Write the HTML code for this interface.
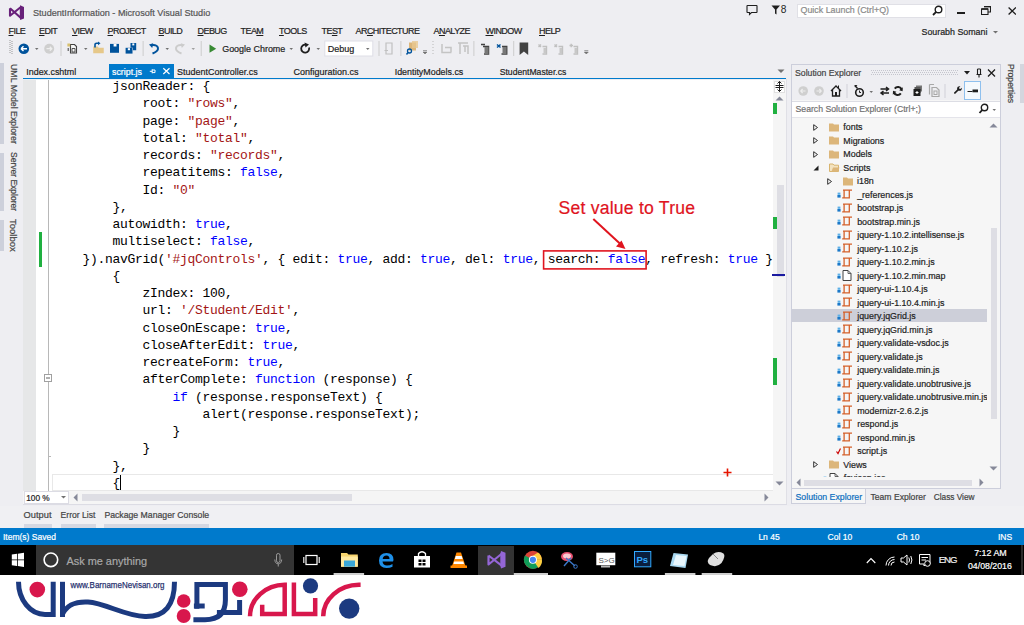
<!DOCTYPE html>
<html><head><meta charset="utf-8">
<style>
*{margin:0;padding:0;box-sizing:border-box}
html,body{width:1024px;height:625px;overflow:hidden;background:#fff}
body{position:relative;font-family:"Liberation Sans",sans-serif;font-size:9px;color:#1e1e1e}
.a{position:absolute}
.t{position:absolute;white-space:pre;line-height:1;-webkit-text-stroke:0.2px currentColor}
#vs{position:absolute;left:0;top:0;width:1024px;height:545px;background:#eeeef2}
.menu .t{font-size:9px;letter-spacing:-0.55px;color:#1e1e1e;top:26.8px}
.u{text-decoration:underline;text-underline-offset:1px}
pre.code{position:absolute;left:82.5px;top:78px;font-family:"Liberation Mono",monospace;font-size:13px;letter-spacing:-0.3px;line-height:17.25px;color:#000;white-space:pre}
.k{color:#0000ff}.s{color:#a31515}
</style></head><body>
<div id="vs">
  <!-- title bar -->
  <svg class="a" style="left:0;top:0" width="30" height="24" viewBox="0 0 30 24"><g stroke="#68217a" stroke-width="2.1" fill="none" stroke-linejoin="round"><path d="M10 8.2V15.8L21.5 6.5M10 8.2L21.5 18.5"/></g><path d="M20.2 5.3L24 6.9V18.4L20.2 20L19.8 17.2V7.8Z" fill="#68217a"/></svg>
  <div class="t" style="left:33px;top:9.2px;font-size:9.1px;color:#555">StudentInformation - Microsoft Visual Studio</div>

  <!-- menu -->
  <div class="menu">
    <div class="t" style="left:8.5px"><span class="u">F</span>ILE</div>
    <div class="t" style="left:39px"><span class="u">E</span>DIT</div>
    <div class="t" style="left:72px"><span class="u">V</span>IEW</div>
    <div class="t" style="left:107.5px"><span class="u">P</span>ROJECT</div>
    <div class="t" style="left:158.5px"><span class="u">B</span>UILD</div>
    <div class="t" style="left:197.5px"><span class="u">D</span>EBUG</div>
    <div class="t" style="left:240.5px">TEA<span class="u">M</span></div>
    <div class="t" style="left:279px"><span class="u">T</span>OOLS</div>
    <div class="t" style="left:321.5px">TE<span class="u">S</span>T</div>
    <div class="t" style="left:355.5px">AR<span class="u">C</span>HITECTURE</div>
    <div class="t" style="left:433.5px">A<span class="u">N</span>ALYZE</div>
    <div class="t" style="left:485.5px"><span class="u">W</span>INDOW</div>
    <div class="t" style="left:539px"><span class="u">H</span>ELP</div>
  </div>
  <div class="t" style="left:921.5px;top:27.7px;font-size:8.85px">Sourabh Somani</div>
  <svg class="a" style="left:993px;top:31px" width="5" height="3"><path d="M0 0H5L2.5 2.5Z" fill="#717171"/></svg>

  <!-- title right -->
  <svg class="a" style="left:744px;top:3px" width="16" height="14" viewBox="0 0 16 14"><path d="M3.5 2.5H12.5Q13 2.5 13 3V9Q13 9.5 12.5 9.5H7.5L5.5 11.5V9.5H3.5Q3 9.5 3 9V3Q3 2.5 3.5 2.5Z" fill="none" stroke="#1e1e1e" stroke-width="1.1"/></svg>
  <svg class="a" style="left:771px;top:5px" width="10" height="10" viewBox="0 0 10 10"><path d="M0.5 0.5H9L5.5 4.5V9.5L4 8.5V4.5Z" fill="#1e1e1e"/></svg>
  <div class="t" style="left:780.8px;top:5px;font-size:10.2px;-webkit-text-stroke:0">8</div>
  <div class="a" style="left:796.5px;top:3.5px;width:149px;height:14px;background:#fff;border:1px solid #e0e0e6"></div>
  <div class="t" style="left:800.5px;top:6px;font-size:8.9px;color:#8a8a8a">Quick Launch (Ctrl+Q)</div>
  <svg class="a" style="left:932px;top:5px" width="11" height="11" viewBox="0 0 11 11"><circle cx="6.5" cy="4.5" r="3.3" fill="none" stroke="#1e1e1e" stroke-width="1.4"/><path d="M4.2 6.8L1 10" stroke="#1e1e1e" stroke-width="1.8"/></svg>
  <div class="a" style="left:957px;top:11.5px;width:7.5px;height:2px;background:#1e1e1e"></div>
  <svg class="a" style="left:981px;top:6px" width="10" height="9" viewBox="0 0 10 9"><path d="M3 0.5H9.5V6H7.5 M0.5 3H7V8.5H0.5Z" fill="none" stroke="#1e1e1e" stroke-width="1.1"/><path d="M0.5 3H7" stroke="#1e1e1e" stroke-width="1.6"/><path d="M3 0.7H9.5" stroke="#1e1e1e" stroke-width="1.4"/></svg>
  <svg class="a" style="left:1007.5px;top:7.2px" width="8.5" height="8" viewBox="0 0 8.5 8"><path d="M0.6 0.5L7.9 7.5M7.9 0.5L0.6 7.5" stroke="#1e1e1e" stroke-width="1.3"/></svg>

  <!-- toolbar -->
  <svg class="a" style="left:0;top:38px" width="600" height="22" viewBox="0 0 600 22">
    <g fill="#999">
      <rect x="9.5" y="2" width="1" height="1"/><rect x="11.5" y="3" width="1" height="1"/><rect x="9.5" y="4" width="1" height="1"/><rect x="11.5" y="5" width="1" height="1"/><rect x="9.5" y="6" width="1" height="1"/><rect x="11.5" y="7" width="1" height="1"/><rect x="9.5" y="8" width="1" height="1"/><rect x="11.5" y="9" width="1" height="1"/><rect x="9.5" y="10" width="1" height="1"/><rect x="11.5" y="11" width="1" height="1"/><rect x="9.5" y="12" width="1" height="1"/><rect x="11.5" y="13" width="1" height="1"/><rect x="9.5" y="14" width="1" height="1"/><rect x="11.5" y="15" width="1" height="1"/>
    </g>
    <!-- back -->
    <circle cx="23.8" cy="10.7" r="5.3" fill="#00539c"/>
    <path d="M21 10.7H27M21 10.7L23.5 8.3M21 10.7L23.5 13.1" stroke="#fff" stroke-width="1.4" fill="none"/>
    <path d="M35 10H38.5L36.75 12Z" fill="#717171"/>
    <circle cx="49.2" cy="10.7" r="5" fill="#cfcfcf"/>
    <path d="M46.5 10.7H51.8M49.8 8.7L51.8 10.7L49.8 12.7" stroke="#eee" stroke-width="1.3" fill="none"/>
    <rect x="60.5" y="3" width="1" height="15" fill="#ccc"/>
    <!-- new project -->
    <path d="M70.5 6.5H74.5L76.5 8.5V15H70.5Z" fill="#f6f6f6" stroke="#424242" stroke-width="1.1"/>
    <path d="M72 10.5H75V14H72Z" fill="none" stroke="#424242" stroke-width=".9"/>
    <rect x="67.4" y="5.5" width="2.8" height="3" fill="#d8c070"/>
    <path d="M68.2 10V13" stroke="#424242" stroke-width="1"/>
    <path d="M84 10H87.5L85.75 12Z" fill="#717171"/>
    <!-- open -->
    <path d="M93.2 8.5H97.5L98.8 9.8H103.75V15.2H93.2Z" fill="#e6c88a"/>
    <path d="M95 9.5V6.5Q95 5.3 96.5 5.3H98.5" stroke="#00539c" stroke-width="1.6" fill="none"/>
    <path d="M98 3.5L100.5 5.3L98 7.3Z" fill="#00539c"/>
    <!-- save -->
    <path d="M110 43.9H119V52.8H110Z" transform="translate(0,-38)" fill="#00539c"/>
    <rect x="113.6" y="5.9" width="2.9" height="2.6" fill="#fff"/>
    <!-- save all -->
    <path d="M130.5 5H136.2V12.2H133V9.8H130.5Z" fill="#00539c"/>
    <rect x="132.3" y="5.4" width="2" height="2" fill="#fff"/>
    <path d="M125.6 9.8H132.5V15.6H125.6Z" fill="#00539c"/>
    <rect x="127.8" y="10.2" width="2.2" height="2" fill="#fff"/>
    <rect x="142.6" y="3" width="1" height="15" fill="#ccc"/>
    <!-- undo -->
    <path d="M151.5 7.5Q153 6.8 155 7.2Q158.2 8 158 11Q157.5 13.5 152.5 15.5" stroke="#00539c" stroke-width="1.9" fill="none"/>
    <path d="M149 6.5L153.2 5.3L152.2 10Z" fill="#00539c"/>
    <path d="M165.5 10H169L167.25 12Z" fill="#717171"/>
    <path d="M182.5 7.5Q181 6.8 179 7.2Q175.8 8 176 11Q176.5 13.5 181.5 15.5" stroke="#cccccc" stroke-width="1.9" fill="none"/>
    <path d="M185 6.5L180.8 5.3L181.8 10Z" fill="#cccccc"/>
    <path d="M191.5 10H195L193.25 12Z" fill="#a0a0a0"/>
    <rect x="200.7" y="3" width="1" height="15" fill="#ccc"/>
    <!-- play -->
    <path d="M209.5 6.6V14.8L216.2 10.7Z" fill="#388a34"/>
    <path d="M289.5 10H293L291.25 12Z" fill="#717171"/>
    <!-- refresh -->
    <path d="M309 9.5A4 4 0 1 1 306 6.8" stroke="#1e1e1e" stroke-width="1.8" fill="none"/>
    <path d="M304.5 4.5L309 6.5L305.5 9.5Z" fill="#1e1e1e"/>
    <path d="M316.5 10H320L318.25 12Z" fill="#717171"/>
    <rect x="324.8" y="3" width="48" height="15" fill="#fff" stroke="#dedee6" stroke-width="1"/>
    <path d="M366 10H369.5L367.75 12Z" fill="#717171"/>
    <rect x="378.5" y="3" width="1" height="15" fill="#ccc"/>
    <!-- grey doc -->
    <path d="M386 5H392V16H386Z M384.5 12.5H388" fill="none" stroke="#c0c0c0" stroke-width="1.2"/>
    <rect x="400.4" y="3" width="1" height="15" fill="#ccc"/>
    <!-- find in files -->
    <path d="M409 4.5H416V12.5H409Z" fill="#dcb67a"/>
    <path d="M412 3H418V10H412Z" fill="#e8c890" opacity=".8"/>
    <circle cx="409.5" cy="13" r="2" fill="none" stroke="#00539c" stroke-width="1.3"/>
    <path d="M408 14.5L406.5 16.5" stroke="#00539c" stroke-width="1.4"/>
    <path d="M423 14H427L425 16Z M423 12.5H427" fill="#717171" stroke="#717171" stroke-width=".6"/>
    <g fill="#b8b8b8"><rect x="432.5" y="3" width="1" height="1"/><rect x="432.5" y="6" width="1" height="1"/><rect x="432.5" y="9" width="1" height="1"/><rect x="432.5" y="12" width="1" height="1"/><rect x="432.5" y="15" width="1" height="1"/></g>
    <path d="M442 6V14.5H451.5M445 9.5H451V14" fill="none" stroke="#c4c4c4" stroke-width="1.5"/>
    <path d="M458 5H468M460 5V16M463 8H468V16M465 8V14" fill="none" stroke="#c4c4c4" stroke-width="1.5"/>
    <rect x="473.4" y="3" width="1" height="15" fill="#ccc"/>
    <path d="M481 6.5H485M483 8.5H488.5V16H484" fill="none" stroke="#424242" stroke-width="1.5"/>
    <rect x="484.5" y="9" width="4" height="7" fill="#777"/>
    <path d="M497 6.5L500.5 9.5M497 9.5L500.5 6.5" fill="none" stroke="#00539c" stroke-width="1.5"/>
    <path d="M502 8.5H506.7V16H501.5" fill="none" stroke="#424242" stroke-width="1.5"/>
    <rect x="502.5" y="9" width="4" height="7" fill="#777"/>
    <rect x="513.2" y="3" width="1" height="15" fill="#ccc"/>
    <path d="M519.6 4.5H528.2V17L523.9 13.5L519.6 17Z" fill="#424242"/>
    <g fill="none" stroke="#c0c0c0" stroke-width="1.4">
      <path d="M538.5 6.5L541 9M541 6.5L538.5 9M542.5 8.5H546.5V16H542.5"/>
      <path d="M554.5 6.5L557 9M557 6.5L554.5 9M558.5 8.5H562.5V16H558.5"/>
      <path d="M569.5 7.5H573M571.2 5.7V9.3M573.5 8.5H577.5V16H573.5"/>
    </g>
    <g fill="#c8c8c8"><rect x="543.5" y="10" width="2.5" height="5"/><rect x="559.5" y="10" width="2.5" height="5"/><rect x="574.5" y="10" width="2.5" height="5"/></g>
    <path d="M584.3 14H588.3L586.3 16Z M584.3 12.5H588.3" fill="#717171" stroke="#717171" stroke-width=".6"/>
  </svg>
  <div class="t" style="left:222.2px;top:44.6px;font-size:8.95px">Google Chrome</div>
  <div class="t" style="left:327.7px;top:44.6px;font-size:9px">Debug</div>

  <!-- document tabs -->
  <div class="a" style="left:23px;top:77.5px;width:763px;height:1.75px;background:#007acc"></div>
  <div class="a" style="left:109px;top:64px;width:65px;height:14px;background:#007acc"></div>
  <div class="t" style="left:112px;top:67.7px;font-size:8.85px;color:#fff">script.js</div>
  <div class="t" style="left:26.3px;top:67.7px;font-size:8.9px">Index.cshtml</div>
  <div class="t" style="left:177px;top:67.7px;font-size:8.97px">StudentController.cs</div>
  <div class="t" style="left:293.5px;top:67.7px;font-size:9.0px">Configuration.cs</div>
  <div class="t" style="left:394.7px;top:67.7px;font-size:8.9px">IdentityModels.cs</div>
  <div class="t" style="left:499.7px;top:67.7px;font-size:8.65px">StudentMaster.cs</div>

  <svg class="a" style="left:147px;top:66px" width="28" height="12" viewBox="0 0 28 12"><path d="M2.8 5.3H5.2M5.2 3.3V7.3M5.2 4H8V6.6H5.2" stroke="#fff" stroke-width="1" fill="none"/><path d="M16.3 2.3L22.5 8M22.5 2.3L16.3 8" stroke="#fff" stroke-width="1.2"/></svg>
  <svg class="a" style="left:777px;top:69px" width="8" height="5"><path d="M0.5 0.5H7.5L4 4Z" fill="#717171"/></svg>

  <!-- left vertical tabs -->
  <div class="a" style="left:0;top:63px;width:3.5px;height:81px;background:#cdd0db"></div>
  <div class="a" style="left:0;top:152.5px;width:3.5px;height:58px;background:#cdd0db"></div>
  <div class="a" style="left:0;top:219.5px;width:3.5px;height:31px;background:#cdd0db"></div>
  <div class="t" style="left:8px;top:64px;transform-origin:0 0;transform:translate(9.5px,0) rotate(90deg);font-size:8.8px;color:#444">UML Model Explorer</div>
  <div class="t" style="left:8px;top:152px;transform-origin:0 0;transform:translate(9.5px,0) rotate(90deg);font-size:8.5px;color:#444">Server Explorer</div>
  <div class="t" style="left:8px;top:218.5px;transform-origin:0 0;transform:translate(9.5px,0) rotate(90deg);font-size:9.5px;color:#444">Toolbox</div>

  <!-- editor -->
  <div class="a" style="left:23px;top:79.5px;width:763px;height:425px;background:#fff"></div>
  <div class="a" style="left:23px;top:79.5px;width:13px;height:411px;background:#e6e7e8"></div>
  <div class="a" style="left:48px;top:79.5px;width:1px;height:411px;background:#b8b8b8"></div>
  <div class="a" style="left:39px;top:232px;width:3px;height:35px;background:#20b040"></div>
  <svg class="a" style="left:44px;top:374px" width="9" height="9"><rect x="0.5" y="0.5" width="7" height="7" fill="#fff" stroke="#a0a0a0"/><path d="M2 4H6" stroke="#606060"/></svg>
  <div class="a" style="left:48px;top:456px;width:3px;height:1px;background:#b8b8b8"></div>
  <div class="a" style="left:51.5px;top:474px;width:721px;height:16.5px;border:1px solid #e8e8e8;border-right:none"></div>
  <div class="a" style="left:120px;top:475px;width:1px;height:15px;background:#000"></div>
  <svg class="a" style="left:723px;top:468px" width="9" height="9"><path d="M4.5 0.5V8.5M0.5 4.5H8.5" stroke="#e51400" stroke-width="1.6"/></svg>
  <!-- v scrollbar -->
  <div class="a" style="left:773px;top:79.5px;width:13px;height:411px;background:#f5f5f5"></div>
  <div class="a" style="left:773.5px;top:80.5px;width:11px;height:12px;background:#fff;border:1px solid #e0e0e0"></div>
  <svg class="a" style="left:774px;top:81px" width="11" height="11"><path d="M5.5 0.5V10.5M1.5 4.5H9.5M1.5 6.5H9.5M3.5 2.5L5.5 0.5L7.5 2.5M3.5 8.5L5.5 10.5L7.5 8.5" stroke="#1e1e1e" stroke-width="1" fill="none"/></svg>
  <svg class="a" style="left:775px;top:96px" width="9" height="5"><path d="M0.5 4.5L4.5 0.5L8.5 4.5Z" fill="#868999"/></svg>
  <div class="a" style="left:776.5px;top:185px;width:7px;height:92px;background:#dedee4"></div>
  <div class="a" style="left:773px;top:103px;width:3.5px;height:10.5px;background:#20b040"></div>
  <div class="a" style="left:773px;top:217px;width:3.5px;height:11.5px;background:#20b040"></div>
  <div class="a" style="left:773px;top:358px;width:3.5px;height:27px;background:#20b040"></div>
  <div class="a" style="left:772px;top:273.5px;width:13px;height:2px;background:#1a1aa0"></div>
  <svg class="a" style="left:775px;top:481px" width="9" height="5"><path d="M0.5 0.5L4.5 4.5L8.5 0.5Z" fill="#868999"/></svg>
  <!-- h scrollbar row -->
  <div class="a" style="left:23px;top:490.5px;width:763px;height:13px;background:#f5f5f5"></div>
  <div class="a" style="left:24px;top:491px;width:44.5px;height:12.5px;background:#fff;border:1px solid #dcdce4"></div>
  <div class="t" style="left:26.2px;top:494px;font-size:8.3px">100 %</div>
  <svg class="a" style="left:61px;top:496px" width="5" height="3"><path d="M0 0H5L2.5 2.5Z" fill="#717171"/></svg>
  <svg class="a" style="left:73px;top:493px" width="5" height="9"><path d="M4.5 0.5L0.5 4.5L4.5 8.5Z" fill="#868999"/></svg>
  <div class="a" style="left:81.5px;top:493.5px;width:270px;height:7px;background:#dedee4"></div>
  <svg class="a" style="left:764px;top:493px" width="5" height="9"><path d="M0.5 0.5L4.5 4.5L0.5 8.5Z" fill="#868999"/></svg>
  <div class="a" style="left:786px;top:79px;width:1px;height:425px;background:#e0e0e6"></div>
  <div class="a" style="left:23px;top:503.5px;width:764px;height:1px;background:#dcdce4"></div>
  <div class="a" style="left:0;top:506px;width:1024px;height:21.5px;background:#f0f0f3"></div>

  <!-- bottom tool tabs -->
  <div class="t" style="left:23.6px;top:511px;font-size:9.3px;color:#444">Output</div>
  <div class="t" style="left:60.6px;top:511px;font-size:8.6px;color:#444">Error List</div>
  <div class="t" style="left:104.4px;top:511px;font-size:8.7px;color:#444">Package Manager Console</div>
  <div class="a" style="left:23.6px;top:523.5px;width:28px;height:4px;background:#d5d8e2"></div>
  <div class="a" style="left:60.6px;top:523.5px;width:35px;height:4px;background:#d5d8e2"></div>
  <div class="a" style="left:104.4px;top:523.5px;width:105px;height:4px;background:#d5d8e2"></div>
  <pre class="code">    jsonReader: {
        root: <span class="s">"rows"</span>,
        page: <span class="s">"page"</span>,
        total: <span class="s">"total"</span>,
        records: <span class="s">"records"</span>,
        repeatitems: <span class="k">false</span>,
        Id: <span class="s">"0"</span>
    },
    autowidth: <span class="k">true</span>,
    multiselect: <span class="k">false</span>,
}).navGrid(<span class="s">'#jqControls'</span>, { edit: <span class="k">true</span>, add: <span class="k">true</span>, del: <span class="k">true</span>, search: <span class="k">false</span>, refresh: <span class="k">true</span> }
    {
        zIndex: 100,
        url: <span class="s">'/Student/Edit'</span>,
        closeOnEscape: <span class="k">true</span>,
        closeAfterEdit: <span class="k">true</span>,
        recreateForm: <span class="k">true</span>,
        afterComplete: <span class="k">function</span> (response) {
            <span class="k">if</span> (response.responseText) {
                alert(response.responseText);
            }
        }
    },
    {</pre>

  <!-- solution explorer -->
  <div class="a" style="left:791px;top:64px;width:210px;height:425px;background:#f6f6f6;border:1px solid #cccedb"></div>
  <div class="a" style="left:792px;top:65px;width:208px;height:35px;background:#eeeef2"></div>
  <div class="t" style="left:795px;top:68.5px;font-size:8.7px;color:#444">Solution Explorer</div>
  <svg class="a" style="left:866px;top:69px" width="94" height="7"><g fill="#c4c5cd"><rect x="5" y="1" width="1" height="1"/><rect x="7" y="1" width="1" height="1"/><rect x="9" y="1" width="1" height="1"/><rect x="11" y="1" width="1" height="1"/><rect x="13" y="1" width="1" height="1"/><rect x="15" y="1" width="1" height="1"/><rect x="17" y="1" width="1" height="1"/><rect x="19" y="1" width="1" height="1"/><rect x="21" y="1" width="1" height="1"/><rect x="23" y="1" width="1" height="1"/><rect x="25" y="1" width="1" height="1"/><rect x="27" y="1" width="1" height="1"/><rect x="29" y="1" width="1" height="1"/><rect x="31" y="1" width="1" height="1"/><rect x="33" y="1" width="1" height="1"/><rect x="35" y="1" width="1" height="1"/><rect x="37" y="1" width="1" height="1"/><rect x="39" y="1" width="1" height="1"/><rect x="41" y="1" width="1" height="1"/><rect x="43" y="1" width="1" height="1"/><rect x="45" y="1" width="1" height="1"/><rect x="47" y="1" width="1" height="1"/><rect x="49" y="1" width="1" height="1"/><rect x="51" y="1" width="1" height="1"/><rect x="53" y="1" width="1" height="1"/><rect x="55" y="1" width="1" height="1"/><rect x="57" y="1" width="1" height="1"/><rect x="59" y="1" width="1" height="1"/><rect x="61" y="1" width="1" height="1"/><rect x="63" y="1" width="1" height="1"/><rect x="65" y="1" width="1" height="1"/><rect x="67" y="1" width="1" height="1"/><rect x="69" y="1" width="1" height="1"/><rect x="71" y="1" width="1" height="1"/><rect x="73" y="1" width="1" height="1"/><rect x="75" y="1" width="1" height="1"/><rect x="77" y="1" width="1" height="1"/><rect x="79" y="1" width="1" height="1"/><rect x="81" y="1" width="1" height="1"/><rect x="83" y="1" width="1" height="1"/><rect x="85" y="1" width="1" height="1"/><rect x="87" y="1" width="1" height="1"/><rect x="89" y="1" width="1" height="1"/><rect x="91" y="1" width="1" height="1"/><rect x="6" y="3" width="1" height="1"/><rect x="8" y="3" width="1" height="1"/><rect x="10" y="3" width="1" height="1"/><rect x="12" y="3" width="1" height="1"/><rect x="14" y="3" width="1" height="1"/><rect x="16" y="3" width="1" height="1"/><rect x="18" y="3" width="1" height="1"/><rect x="20" y="3" width="1" height="1"/><rect x="22" y="3" width="1" height="1"/><rect x="24" y="3" width="1" height="1"/><rect x="26" y="3" width="1" height="1"/><rect x="28" y="3" width="1" height="1"/><rect x="30" y="3" width="1" height="1"/><rect x="32" y="3" width="1" height="1"/><rect x="34" y="3" width="1" height="1"/><rect x="36" y="3" width="1" height="1"/><rect x="38" y="3" width="1" height="1"/><rect x="40" y="3" width="1" height="1"/><rect x="42" y="3" width="1" height="1"/><rect x="44" y="3" width="1" height="1"/><rect x="46" y="3" width="1" height="1"/><rect x="48" y="3" width="1" height="1"/><rect x="50" y="3" width="1" height="1"/><rect x="52" y="3" width="1" height="1"/><rect x="54" y="3" width="1" height="1"/><rect x="56" y="3" width="1" height="1"/><rect x="58" y="3" width="1" height="1"/><rect x="60" y="3" width="1" height="1"/><rect x="62" y="3" width="1" height="1"/><rect x="64" y="3" width="1" height="1"/><rect x="66" y="3" width="1" height="1"/><rect x="68" y="3" width="1" height="1"/><rect x="70" y="3" width="1" height="1"/><rect x="72" y="3" width="1" height="1"/><rect x="74" y="3" width="1" height="1"/><rect x="76" y="3" width="1" height="1"/><rect x="78" y="3" width="1" height="1"/><rect x="80" y="3" width="1" height="1"/><rect x="82" y="3" width="1" height="1"/><rect x="84" y="3" width="1" height="1"/><rect x="86" y="3" width="1" height="1"/><rect x="88" y="3" width="1" height="1"/><rect x="90" y="3" width="1" height="1"/><rect x="5" y="5" width="1" height="1"/><rect x="7" y="5" width="1" height="1"/><rect x="9" y="5" width="1" height="1"/><rect x="11" y="5" width="1" height="1"/><rect x="13" y="5" width="1" height="1"/><rect x="15" y="5" width="1" height="1"/><rect x="17" y="5" width="1" height="1"/><rect x="19" y="5" width="1" height="1"/><rect x="21" y="5" width="1" height="1"/><rect x="23" y="5" width="1" height="1"/><rect x="25" y="5" width="1" height="1"/><rect x="27" y="5" width="1" height="1"/><rect x="29" y="5" width="1" height="1"/><rect x="31" y="5" width="1" height="1"/><rect x="33" y="5" width="1" height="1"/><rect x="35" y="5" width="1" height="1"/><rect x="37" y="5" width="1" height="1"/><rect x="39" y="5" width="1" height="1"/><rect x="41" y="5" width="1" height="1"/><rect x="43" y="5" width="1" height="1"/><rect x="45" y="5" width="1" height="1"/><rect x="47" y="5" width="1" height="1"/><rect x="49" y="5" width="1" height="1"/><rect x="51" y="5" width="1" height="1"/><rect x="53" y="5" width="1" height="1"/><rect x="55" y="5" width="1" height="1"/><rect x="57" y="5" width="1" height="1"/><rect x="59" y="5" width="1" height="1"/><rect x="61" y="5" width="1" height="1"/><rect x="63" y="5" width="1" height="1"/><rect x="65" y="5" width="1" height="1"/><rect x="67" y="5" width="1" height="1"/><rect x="69" y="5" width="1" height="1"/><rect x="71" y="5" width="1" height="1"/><rect x="73" y="5" width="1" height="1"/><rect x="75" y="5" width="1" height="1"/><rect x="77" y="5" width="1" height="1"/><rect x="79" y="5" width="1" height="1"/><rect x="81" y="5" width="1" height="1"/><rect x="83" y="5" width="1" height="1"/><rect x="85" y="5" width="1" height="1"/><rect x="87" y="5" width="1" height="1"/><rect x="89" y="5" width="1" height="1"/><rect x="91" y="5" width="1" height="1"/></g></svg>
  <svg class="a" style="left:963px;top:68px" width="34" height="10" viewBox="0 0 34 10"><path d="M1 3H7L4 6.5Z" fill="#1e1e1e"/><path d="M14.5 1V6.5M17.5 1V6.5M13.5 6.5H18.5M16 6.5V9.5M14.5 1H17.5" stroke="#1e1e1e" stroke-width="1.1" fill="none"/><path d="M25 1.5L32 8.5M32 1.5L25 8.5" stroke="#1e1e1e" stroke-width="1.3"/></svg>
  <svg class="a" style="left:792px;top:80px" width="208" height="21" viewBox="0 0 208 21">
    <circle cx="11.2" cy="11" r="4.8" fill="#cfcfcf"/><path d="M8.8 11H13.5M10.6 9L8.8 11L10.6 13" stroke="#eee" stroke-width="1.2" fill="none"/>
    <circle cx="27" cy="11" r="4.8" fill="#cfcfcf"/><path d="M24.5 11H29.2M27.4 9L29.2 11L27.4 13" stroke="#eee" stroke-width="1.2" fill="none"/>
    <path d="M39 11L44 6L49 11M40.5 9.5V16H47.5V9.5" fill="none" stroke="#1e1e1e" stroke-width="1.3"/><rect x="43" y="12" width="2" height="4" fill="#1e1e1e"/><path d="M46.5 5.5V8" stroke="#1e1e1e" stroke-width="1"/>
    <rect x="54.5" y="4" width="1" height="14" fill="#d0d0d8"/>
    <circle cx="67.5" cy="12.5" r="3.8" fill="none" stroke="#1e1e1e" stroke-width="1.6"/><path d="M67.5 10.5V12.5H69" stroke="#1e1e1e" stroke-width="1" fill="none"/><path d="M63 5.5L65.5 8.5" stroke="#1e1e1e" stroke-width="1.3"/><path d="M62.5 5H65.5L63 7.5Z" fill="#1e1e1e"/>
    <path d="M77.5 11H81L79.25 13Z" fill="#717171"/>
    <path d="M88.5 9H96M94 7L96.5 9L94 11M97 13H89.5M91.5 11L89 13L91.5 15" stroke="#1e1e1e" stroke-width="1.5" fill="none"/>
    <path d="M109.6 9.6A3.8 3.8 0 0 0 102.8 8.6M102 12.4A3.8 3.8 0 0 0 108.8 13.4" stroke="#1e1e1e" stroke-width="2" fill="none"/><path d="M110.8 7.2L110.6 11.2L107.2 10.2Z M100.8 14.8L101 10.8L104.4 11.8Z" fill="#1e1e1e"/>
    <rect x="124" y="5.5" width="6" height="6" fill="#777"/><rect x="122.5" y="7" width="6" height="6" fill="#555"/><rect x="121.5" y="9" width="7" height="7" fill="#1e1e1e"/><path d="M123.5 12.5H126.5M125 11V14" stroke="#fff" stroke-width="1"/>
    <path d="M137.5 4.5H142M137.5 4.5V14.5M140 7.5H144.5L147 10V16.5H140Z" fill="none" stroke="#a8a8a8" stroke-width="1.2"/><rect x="142" y="11" width="3" height="3.5" fill="none" stroke="#a8a8a8" stroke-width="1"/>
    <rect x="152.5" y="4" width="1" height="14" fill="#d0d0d8"/>
    <path transform="translate(33.5,1.6) scale(0.8)" d="M160.8 13.6L164.6 9.8Q164 7.6 165.4 6.4Q166.8 5.4 168.6 5.9L166.9 7.6L167.3 8.9L168.6 9.3L170.3 7.6Q170.8 9.4 169.6 10.7Q168.3 11.9 166 11.3L162.2 15.1Q161.5 15.6 160.9 15Q160.3 14.3 160.8 13.6Z" fill="#1e1e1e"/>
    <rect x="172.5" y="1.5" width="16" height="18" fill="#f5f9fd" stroke="#8fc0ee" stroke-width="1"/>
    <path d="M175.5 11.5H180.5" stroke="#1e1e1e" stroke-width="1"/><rect x="180.5" y="9.5" width="5.5" height="2.8" fill="#1e1e1e"/>
  </svg>
  <div class="a" style="left:792px;top:100.5px;width:208px;height:1px;background:#dcdde4"></div>
  <div class="a" style="left:792px;top:101.5px;width:208px;height:15px;background:#fff"></div>
  <div class="a" style="left:792px;top:116.5px;width:208px;height:1px;background:#e4e4ea"></div>
  <div class="t" style="left:795.5px;top:105px;font-size:8.7px;color:#717171">Search Solution Explorer (Ctrl+;)</div>
  <svg class="a" style="left:978px;top:103px" width="20" height="12" viewBox="0 0 20 12"><circle cx="6.5" cy="4.5" r="3.2" fill="none" stroke="#1e1e1e" stroke-width="1.4"/><path d="M4.3 6.8L1.5 10" stroke="#1e1e1e" stroke-width="1.8"/><path d="M14.5 6H18L16.25 8Z" fill="#717171"/></svg>
  <!-- se scrollbars -->
  <svg class="a" style="left:989px;top:123px" width="9" height="5"><path d="M0.5 4.5L4.5 0.5L8.5 4.5Z" fill="#868999"/></svg>
  <div class="a" style="left:990.5px;top:227.5px;width:6.5px;height:191px;background:#dedee4"></div>
  <svg class="a" style="left:989px;top:466px" width="9" height="5"><path d="M0.5 0.5L4.5 4.5L8.5 0.5Z" fill="#868999"/></svg>
  <div class="a" style="left:792px;top:477px;width:195px;height:11px;background:#f6f6f6"></div>
  <svg class="a" style="left:795.5px;top:478px" width="5" height="9"><path d="M4.5 0.5L0.5 4.5L4.5 8.5Z" fill="#868999"/></svg>
  <div class="a" style="left:804px;top:479.5px;width:168px;height:6.5px;background:#dedee4"></div>
  <svg class="a" style="left:979px;top:478px" width="5" height="9"><path d="M0.5 0.5L4.5 4.5L0.5 8.5Z" fill="#868999"/></svg>
  <!-- se bottom tabs -->
  <div class="a" style="left:791px;top:488.5px;width:75px;height:15.5px;background:#f6f6f6;border:1px solid #cccedb;border-top:none"></div>
  <div class="t" style="left:795.5px;top:493px;font-size:8.75px;color:#0e70c0">Solution Explorer</div>
  <div class="t" style="left:870.5px;top:493px;font-size:8.6px;color:#444">Team Explorer</div>
  <div class="t" style="left:933.7px;top:493px;font-size:8.3px;color:#444">Class View</div>
  <!-- properties -->
  <div class="t" style="left:1005px;top:64px;transform-origin:0 0;transform:translate(10px,0) rotate(90deg);font-size:8.6px;color:#444">Properties</div>
  <div class="a" style="left:1020px;top:64px;width:4px;height:39px;background:#d4d6de"></div>
<!--SEROWS-->
<div class="a" style="left:792px;top:117px;width:195px;height:360px;overflow:hidden;font-size:8.9px">
<svg class="a" style="left:21.0px;top:6.8px" width="6" height="7"><path d="M0.7 0.7V6.3L4.5 3.5Z" fill="none" stroke="#1e1e1e" stroke-width="0.9"/></svg>
<svg class="a" style="left:37.0px;top:5.8px" width="11" height="9"><path d="M0 0.5H4L5 1.5H10V8.5H0Z" fill="#dcb67a"/></svg>
<div class="t" style="left:51.3px;top:6.2px">fonts</div>
<svg class="a" style="left:21.0px;top:20.3px" width="6" height="7"><path d="M0.7 0.7V6.3L4.5 3.5Z" fill="none" stroke="#1e1e1e" stroke-width="0.9"/></svg>
<svg class="a" style="left:37.0px;top:19.3px" width="11" height="9"><path d="M0 0.5H4L5 1.5H10V8.5H0Z" fill="#dcb67a"/></svg>
<div class="t" style="left:51.3px;top:19.7px">Migrations</div>
<svg class="a" style="left:21.0px;top:33.8px" width="6" height="7"><path d="M0.7 0.7V6.3L4.5 3.5Z" fill="none" stroke="#1e1e1e" stroke-width="0.9"/></svg>
<svg class="a" style="left:37.0px;top:32.8px" width="11" height="9"><path d="M0 0.5H4L5 1.5H10V8.5H0Z" fill="#dcb67a"/></svg>
<div class="t" style="left:51.3px;top:33.2px">Models</div>
<svg class="a" style="left:21.0px;top:47.8px" width="6" height="6"><path d="M5.5 0.5V5.5H0.5Z" fill="#1e1e1e"/></svg>
<svg class="a" style="left:37.0px;top:46.3px" width="11" height="9"><path d="M0.5 1H4L5 2.2H9.5V8.5H0.5Z" fill="#f3e3c0" stroke="#d8b46e" stroke-width="1"/><path d="M2.5 8.5L4 4.5H10.5L9 8.5Z" fill="#dcb67a"/></svg>
<div class="t" style="left:51.3px;top:46.7px">Scripts</div>
<svg class="a" style="left:34.7px;top:60.8px" width="6" height="7"><path d="M0.7 0.7V6.3L4.5 3.5Z" fill="none" stroke="#1e1e1e" stroke-width="0.9"/></svg>
<svg class="a" style="left:50.6px;top:59.8px" width="11" height="9"><path d="M0 0.5H4L5 1.5H10V8.5H0Z" fill="#dcb67a"/></svg>
<div class="t" style="left:65.0px;top:60.2px">i18n</div>
<svg class="a" style="left:44.5px;top:75.3px" width="4" height="6"><rect x="0.6" y="0.6" width="2.8" height="2.2" fill="#5cb0e8"/><rect x="0.4" y="3" width="3.2" height="2.6" fill="#1a78c8"/></svg>
<svg class="a" style="left:50px;top:72.3px" width="11" height="11"><path d="M1 1.2H10M2.1 1.2V8.5M7.3 1.2V9.5M0.2 8.9H7.3" fill="none" stroke="#d4602a" stroke-width="1.3"/></svg>
<div class="t" style="left:65.2px;top:73.7px">_references.js</div>
<svg class="a" style="left:44.5px;top:88.8px" width="4" height="6"><rect x="0.6" y="0.6" width="2.8" height="2.2" fill="#5cb0e8"/><rect x="0.4" y="3" width="3.2" height="2.6" fill="#1a78c8"/></svg>
<svg class="a" style="left:50px;top:85.8px" width="11" height="11"><path d="M1 1.2H10M2.1 1.2V8.5M7.3 1.2V9.5M0.2 8.9H7.3" fill="none" stroke="#d4602a" stroke-width="1.3"/></svg>
<div class="t" style="left:65.2px;top:87.2px">bootstrap.js</div>
<svg class="a" style="left:44.5px;top:102.3px" width="4" height="6"><rect x="0.6" y="0.6" width="2.8" height="2.2" fill="#5cb0e8"/><rect x="0.4" y="3" width="3.2" height="2.6" fill="#1a78c8"/></svg>
<svg class="a" style="left:50px;top:99.3px" width="11" height="11"><path d="M1 1.2H10M2.1 1.2V8.5M7.3 1.2V9.5M0.2 8.9H7.3" fill="none" stroke="#d4602a" stroke-width="1.3"/></svg>
<div class="t" style="left:65.2px;top:100.7px">bootstrap.min.js</div>
<svg class="a" style="left:44.5px;top:115.8px" width="4" height="6"><rect x="0.6" y="0.6" width="2.8" height="2.2" fill="#5cb0e8"/><rect x="0.4" y="3" width="3.2" height="2.6" fill="#1a78c8"/></svg>
<svg class="a" style="left:50px;top:112.8px" width="11" height="11"><path d="M1 1.2H10M2.1 1.2V8.5M7.3 1.2V9.5M0.2 8.9H7.3" fill="none" stroke="#d4602a" stroke-width="1.3"/></svg>
<div class="t" style="left:65.2px;top:114.2px">jquery-1.10.2.intellisense.js</div>
<svg class="a" style="left:44.5px;top:129.3px" width="4" height="6"><rect x="0.6" y="0.6" width="2.8" height="2.2" fill="#5cb0e8"/><rect x="0.4" y="3" width="3.2" height="2.6" fill="#1a78c8"/></svg>
<svg class="a" style="left:50px;top:126.3px" width="11" height="11"><path d="M1 1.2H10M2.1 1.2V8.5M7.3 1.2V9.5M0.2 8.9H7.3" fill="none" stroke="#d4602a" stroke-width="1.3"/></svg>
<div class="t" style="left:65.2px;top:127.7px">jquery-1.10.2.js</div>
<svg class="a" style="left:44.5px;top:142.8px" width="4" height="6"><rect x="0.6" y="0.6" width="2.8" height="2.2" fill="#5cb0e8"/><rect x="0.4" y="3" width="3.2" height="2.6" fill="#1a78c8"/></svg>
<svg class="a" style="left:50px;top:139.8px" width="11" height="11"><path d="M1 1.2H10M2.1 1.2V8.5M7.3 1.2V9.5M0.2 8.9H7.3" fill="none" stroke="#d4602a" stroke-width="1.3"/></svg>
<div class="t" style="left:65.2px;top:141.2px">jquery-1.10.2.min.js</div>
<svg class="a" style="left:44.5px;top:156.3px" width="4" height="6"><rect x="0.6" y="0.6" width="2.8" height="2.2" fill="#5cb0e8"/><rect x="0.4" y="3" width="3.2" height="2.6" fill="#1a78c8"/></svg>
<svg class="a" style="left:50px;top:153.3px" width="10" height="11"><path d="M1 0.5H6L9 3.5V10.5H1Z" fill="#fff" stroke="#424242" stroke-width="1"/><path d="M6 0.5V3.5H9" fill="none" stroke="#424242" stroke-width=".8"/></svg>
<div class="t" style="left:65.2px;top:154.7px">jquery-1.10.2.min.map</div>
<svg class="a" style="left:44.5px;top:169.8px" width="4" height="6"><rect x="0.6" y="0.6" width="2.8" height="2.2" fill="#5cb0e8"/><rect x="0.4" y="3" width="3.2" height="2.6" fill="#1a78c8"/></svg>
<svg class="a" style="left:50px;top:166.8px" width="11" height="11"><path d="M1 1.2H10M2.1 1.2V8.5M7.3 1.2V9.5M0.2 8.9H7.3" fill="none" stroke="#d4602a" stroke-width="1.3"/></svg>
<div class="t" style="left:65.2px;top:168.2px">jquery-ui-1.10.4.js</div>
<svg class="a" style="left:44.5px;top:183.3px" width="4" height="6"><rect x="0.6" y="0.6" width="2.8" height="2.2" fill="#5cb0e8"/><rect x="0.4" y="3" width="3.2" height="2.6" fill="#1a78c8"/></svg>
<svg class="a" style="left:50px;top:180.3px" width="11" height="11"><path d="M1 1.2H10M2.1 1.2V8.5M7.3 1.2V9.5M0.2 8.9H7.3" fill="none" stroke="#d4602a" stroke-width="1.3"/></svg>
<div class="t" style="left:65.2px;top:181.7px">jquery-ui-1.10.4.min.js</div>
<div class="a" style="left:0;top:192.3px;width:195px;height:13px;background:#cdcfd9"></div>
<svg class="a" style="left:44.5px;top:196.8px" width="4" height="6"><rect x="0.6" y="0.6" width="2.8" height="2.2" fill="#5cb0e8"/><rect x="0.4" y="3" width="3.2" height="2.6" fill="#1a78c8"/></svg>
<svg class="a" style="left:50px;top:193.8px" width="11" height="11"><path d="M1 1.2H10M2.1 1.2V8.5M7.3 1.2V9.5M0.2 8.9H7.3" fill="none" stroke="#d4602a" stroke-width="1.3"/></svg>
<div class="t" style="left:65.2px;top:195.2px">jquery.jqGrid.js</div>
<svg class="a" style="left:44.5px;top:210.3px" width="4" height="6"><rect x="0.6" y="0.6" width="2.8" height="2.2" fill="#5cb0e8"/><rect x="0.4" y="3" width="3.2" height="2.6" fill="#1a78c8"/></svg>
<svg class="a" style="left:50px;top:207.3px" width="11" height="11"><path d="M1 1.2H10M2.1 1.2V8.5M7.3 1.2V9.5M0.2 8.9H7.3" fill="none" stroke="#d4602a" stroke-width="1.3"/></svg>
<div class="t" style="left:65.2px;top:208.7px">jquery.jqGrid.min.js</div>
<svg class="a" style="left:44.5px;top:223.8px" width="4" height="6"><rect x="0.6" y="0.6" width="2.8" height="2.2" fill="#5cb0e8"/><rect x="0.4" y="3" width="3.2" height="2.6" fill="#1a78c8"/></svg>
<svg class="a" style="left:50px;top:220.8px" width="11" height="11"><path d="M1 1.2H10M2.1 1.2V8.5M7.3 1.2V9.5M0.2 8.9H7.3" fill="none" stroke="#d4602a" stroke-width="1.3"/></svg>
<div class="t" style="left:65.2px;top:222.2px">jquery.validate-vsdoc.js</div>
<svg class="a" style="left:44.5px;top:237.3px" width="4" height="6"><rect x="0.6" y="0.6" width="2.8" height="2.2" fill="#5cb0e8"/><rect x="0.4" y="3" width="3.2" height="2.6" fill="#1a78c8"/></svg>
<svg class="a" style="left:50px;top:234.3px" width="11" height="11"><path d="M1 1.2H10M2.1 1.2V8.5M7.3 1.2V9.5M0.2 8.9H7.3" fill="none" stroke="#d4602a" stroke-width="1.3"/></svg>
<div class="t" style="left:65.2px;top:235.7px">jquery.validate.js</div>
<svg class="a" style="left:44.5px;top:250.8px" width="4" height="6"><rect x="0.6" y="0.6" width="2.8" height="2.2" fill="#5cb0e8"/><rect x="0.4" y="3" width="3.2" height="2.6" fill="#1a78c8"/></svg>
<svg class="a" style="left:50px;top:247.8px" width="11" height="11"><path d="M1 1.2H10M2.1 1.2V8.5M7.3 1.2V9.5M0.2 8.9H7.3" fill="none" stroke="#d4602a" stroke-width="1.3"/></svg>
<div class="t" style="left:65.2px;top:249.2px">jquery.validate.min.js</div>
<svg class="a" style="left:44.5px;top:264.3px" width="4" height="6"><rect x="0.6" y="0.6" width="2.8" height="2.2" fill="#5cb0e8"/><rect x="0.4" y="3" width="3.2" height="2.6" fill="#1a78c8"/></svg>
<svg class="a" style="left:50px;top:261.3px" width="11" height="11"><path d="M1 1.2H10M2.1 1.2V8.5M7.3 1.2V9.5M0.2 8.9H7.3" fill="none" stroke="#d4602a" stroke-width="1.3"/></svg>
<div class="t" style="left:65.2px;top:262.7px">jquery.validate.unobtrusive.js</div>
<svg class="a" style="left:44.5px;top:277.8px" width="4" height="6"><rect x="0.6" y="0.6" width="2.8" height="2.2" fill="#5cb0e8"/><rect x="0.4" y="3" width="3.2" height="2.6" fill="#1a78c8"/></svg>
<svg class="a" style="left:50px;top:274.8px" width="11" height="11"><path d="M1 1.2H10M2.1 1.2V8.5M7.3 1.2V9.5M0.2 8.9H7.3" fill="none" stroke="#d4602a" stroke-width="1.3"/></svg>
<div class="t" style="left:65.2px;top:276.2px">jquery.validate.unobtrusive.min.js</div>
<svg class="a" style="left:44.5px;top:291.3px" width="4" height="6"><rect x="0.6" y="0.6" width="2.8" height="2.2" fill="#5cb0e8"/><rect x="0.4" y="3" width="3.2" height="2.6" fill="#1a78c8"/></svg>
<svg class="a" style="left:50px;top:288.3px" width="11" height="11"><path d="M1 1.2H10M2.1 1.2V8.5M7.3 1.2V9.5M0.2 8.9H7.3" fill="none" stroke="#d4602a" stroke-width="1.3"/></svg>
<div class="t" style="left:65.2px;top:289.7px">modernizr-2.6.2.js</div>
<svg class="a" style="left:44.5px;top:304.8px" width="4" height="6"><rect x="0.6" y="0.6" width="2.8" height="2.2" fill="#5cb0e8"/><rect x="0.4" y="3" width="3.2" height="2.6" fill="#1a78c8"/></svg>
<svg class="a" style="left:50px;top:301.8px" width="11" height="11"><path d="M1 1.2H10M2.1 1.2V8.5M7.3 1.2V9.5M0.2 8.9H7.3" fill="none" stroke="#d4602a" stroke-width="1.3"/></svg>
<div class="t" style="left:65.2px;top:303.2px">respond.js</div>
<svg class="a" style="left:44.5px;top:318.3px" width="4" height="6"><rect x="0.6" y="0.6" width="2.8" height="2.2" fill="#5cb0e8"/><rect x="0.4" y="3" width="3.2" height="2.6" fill="#1a78c8"/></svg>
<svg class="a" style="left:50px;top:315.3px" width="11" height="11"><path d="M1 1.2H10M2.1 1.2V8.5M7.3 1.2V9.5M0.2 8.9H7.3" fill="none" stroke="#d4602a" stroke-width="1.3"/></svg>
<div class="t" style="left:65.2px;top:316.7px">respond.min.js</div>
<svg class="a" style="left:44px;top:330.8px" width="5" height="7"><path d="M0.5 3.5L2 5.5L4.5 0.5" stroke="#c00" stroke-width="1.2" fill="none"/></svg>
<svg class="a" style="left:50px;top:328.8px" width="11" height="11"><path d="M1 1.2H10M2.1 1.2V8.5M7.3 1.2V9.5M0.2 8.9H7.3" fill="none" stroke="#d4602a" stroke-width="1.3"/></svg>
<div class="t" style="left:65.2px;top:330.2px">script.js</div>
<svg class="a" style="left:21.0px;top:344.3px" width="6" height="7"><path d="M0.7 0.7V6.3L4.5 3.5Z" fill="none" stroke="#1e1e1e" stroke-width="0.9"/></svg>
<svg class="a" style="left:37.0px;top:343.3px" width="11" height="9"><path d="M0 0.5H4L5 1.5H10V8.5H0Z" fill="#dcb67a"/></svg>
<div class="t" style="left:51.3px;top:343.7px">Views</div>
<svg class="a" style="left:31.0px;top:358.8px" width="4" height="6"><rect x="0.6" y="0.6" width="2.8" height="2.2" fill="#5cb0e8"/><rect x="0.4" y="3" width="3.2" height="2.6" fill="#1a78c8"/></svg>
<svg class="a" style="left:36.5px;top:355.8px" width="10" height="11"><path d="M1 0.5H6L9 3.5V10.5H1Z" fill="#fff" stroke="#424242" stroke-width="1"/><path d="M6 0.5V3.5H9" fill="none" stroke="#424242" stroke-width=".8"/></svg>
<div class="t" style="left:51.7px;top:357.2px">favicon.ico</div>
</div>
<!--/SEROWS-->

  <!-- status bar -->
  <div class="a" style="left:0;top:528px;width:1024px;height:17px;background:#007acc"></div>
  <div class="t" style="left:3px;top:533px;font-size:8.5px;color:#fff">Item(s) Saved</div>
  <div class="t" style="left:758.4px;top:533px;font-size:8.5px;color:#fff">Ln 45</div>
  <div class="t" style="left:827.6px;top:533px;font-size:8.5px;color:#fff">Col 10</div>
  <div class="t" style="left:896.7px;top:533px;font-size:8.5px;color:#fff">Ch 10</div>
  <div class="t" style="left:998px;top:533px;font-size:8.5px;color:#fff">INS</div>

  <!-- annotation -->
  <div class="t" style="left:558.5px;top:200px;font-size:17.6px;letter-spacing:0.22px;color:#e0141e">Set value to True</div>
  <svg class="a" style="left:540px;top:215px" width="110" height="57" viewBox="0 0 110 57">
    <path d="M53.3 4L82 30.5" stroke="#e0141e" stroke-width="2"/>
    <path d="M85.5 34L76 31.5L81.5 25.5Z" fill="#e0141e"/>
    <rect x="3.6" y="35.9" width="102.5" height="18" fill="none" stroke="#e0141e" stroke-width="1.6"/>
  </svg>
</div>
<!-- taskbar -->
<div class="a" style="left:0;top:545px;width:1024px;height:30px;background:#000"></div>
<div class="a" style="left:36px;top:545px;width:257.5px;height:30px;background:#343434"></div>
<div class="a" style="left:478.4px;top:545.5px;width:35.5px;height:29px;background:#333"></div>
<svg class="a" style="left:0;top:545px" width="1024" height="30" viewBox="0 0 1024 30">
  <!-- windows logo -->
  <path d="M11.8 9.5L17 8.8V14.5H11.8Z M17.8 8.7L24 7.8V14.5H17.8Z M11.8 15.3H17V21L11.8 20.3Z M17.8 15.3H24V22L17.8 21.1Z" fill="#fff"/>
  <circle cx="50.9" cy="14.8" r="6.8" fill="none" stroke="#fff" stroke-width="1.6"/>
  <!-- mic -->
  <rect x="276.5" y="8.5" width="3.5" height="9" rx="1.7" fill="none" stroke="#9a9a9a" stroke-width="1"/>
  <path d="M274.8 14.5Q275 18.8 278.25 18.8Q281.5 18.8 281.7 14.5M278.25 18.8V21.5" stroke="#9a9a9a" stroke-width="1" fill="none"/>
  <!-- task view -->
  <rect x="306" y="10.5" width="11" height="9" fill="none" stroke="#fff" stroke-width="1.2"/>
  <path d="M303.8 12V18M319.2 12V18" stroke="#fff" stroke-width="1.1"/>
  <!-- explorer -->
  <path d="M341 8H347L348.5 9.5H357.8V21.7H341Z" fill="#f7d46d"/>
  <path d="M341 11.5H357.8V21.7H341Z" fill="#ffe9a0"/>
  <path d="M344 15.5H355V21.7H344Z" fill="#3aa7d8"/>
  <rect x="333.6" y="28" width="30.5" height="2" fill="#cfcfcf"/>
  <!-- edge -->
  <path d="M393 16.5H382.5Q383 20.5 387 20.5Q390 20.5 392.5 19V21.8Q390 23 386.5 23Q379 23 379 15.5Q379 8 386.5 8Q393.5 8 393.5 15ZM389.5 14Q389.5 10.5 386.5 10.5Q383 10.5 382.7 14Z" fill="#1e90e8"/>
  <!-- store -->
  <path d="M414 11H430V22.5H414Z" fill="#fff"/>
  <path d="M418.5 11V8.5Q422 5 425.5 8.5V11" stroke="#fff" stroke-width="1.3" fill="none"/>
  <path d="M418.5 14.5H421.5V17H418.5Z M422.5 14.5H425.5V17H422.5Z M418.5 18H421.5V20.5H418.5Z M422.5 18H425.5V20.5H422.5Z" fill="#000"/>
  <!-- vlc -->
  <path d="M456.5 7.5H461L465.5 21H452Z" fill="#ff8800"/>
  <path d="M455.8 11H461.7L462.6 14H454.9Z M454.2 16.5H463.3L464 19H453.5Z" fill="#fff"/>
  <path d="M450.5 20.5H467V23H450.5Z" fill="#ff8800"/>
  <!-- VS -->
  <g stroke="#9466d6" stroke-width="2.2" fill="none" stroke-linejoin="round"><path d="M488.5 10.5V19.5L502 8.5M488.5 10.5L502 20.8"/></g><path d="M501 6L505.5 7.8V21.8L501 23.6L500.3 20.2V9.2Z" fill="#9466d6"/>
  <!-- chrome -->
  <circle cx="532.9" cy="14.8" r="9" fill="#db4437"/>
  <path d="M532.9 14.8L524.9 10.6A9 9 0 0 0 528.4 22.6Z" fill="#0f9d58"/>
  <path d="M532.9 14.8L528.4 22.6A9 9 0 0 0 541.9 14.5Z" fill="#0f9d58"/>
  <path d="M532.9 14.8L541.9 14.8A9 9 0 0 0 538 7.4L532.9 10.8Z" fill="#ffcd40"/>
  <path d="M532.9 14.8L538.5 23A9 9 0 0 0 541.9 14.8Z" fill="#ffcd40"/>
  <circle cx="532.9" cy="14.8" r="4" fill="#fff"/>
  <circle cx="532.9" cy="14.8" r="3.1" fill="#4285f4"/>
  <rect x="513.8" y="28" width="34.2" height="2" fill="#cfcfcf"/>
  <!-- snipping -->
  <ellipse cx="567" cy="11.5" rx="6" ry="4.5" fill="#e85070"/>
  <ellipse cx="567" cy="11" rx="4" ry="2.5" fill="#f8c8d0"/>
  <path d="M566 13L575 21M571 13L564 21" stroke="#3a78c8" stroke-width="1.4"/>
  <circle cx="575.5" cy="21.5" r="1.8" fill="none" stroke="#3a78c8" stroke-width="1"/>
  <!-- S>G -->
  <rect x="596.3" y="7.7" width="19" height="12.5" fill="#fff"/>
  <text x="598.5" y="17.5" font-family="Liberation Sans" font-size="8" fill="#555">S&gt;G</text>
  <rect x="601" y="20.5" width="9" height="2" fill="#bbb"/>
  <!-- Ps -->
  <rect x="634.5" y="6.5" width="16.3" height="15.3" fill="#0a1e3e" stroke="#31a8ff" stroke-width="1"/>
  <text x="636.5" y="18" font-family="Liberation Sans" font-size="9.5" font-weight="bold" fill="#31a8ff">Ps</text>
  <!-- notepad-like -->
  <path d="M673.5 8L688 9.5L685.5 23L670 21Z" fill="#a8d8f0"/>
  <path d="M676 10L686.5 11L684.5 21L673 20Z" fill="#e8f6fc"/>
  <rect x="664.9" y="28" width="30.5" height="2" fill="#cfcfcf"/>
  <!-- mouse -->
  <path d="M713 9Q718 5.5 723.5 8.5Q726 11 721.5 18Q717 23 710 20Q706 17 709 13Z" fill="#e0e0e0"/>
  <path d="M713 9L718 14" stroke="#888" stroke-width="1"/>
  <rect x="701.7" y="28" width="30.5" height="2" fill="#cfcfcf"/>
  <!-- tray -->
  <path d="M866.8 18L871 13.5L875.3 18" stroke="#fff" stroke-width="1.1" fill="none"/>
  <path d="M886 20.5A8.5 8.5 0 0 1 894.5 12M888.5 20.5A6 6 0 0 1 894.5 14.5M891 20.5A3.5 3.5 0 0 1 894.5 17" stroke="#fff" stroke-width="1" fill="none"/>
  <path d="M901 13H903.5L907 10V20L903.5 17H901Z" fill="none" stroke="#fff" stroke-width="1"/>
  <path d="M908.8 12.5Q910.3 15 908.8 17.5M910.8 11Q913 15 910.8 19" stroke="#fff" stroke-width="1" fill="none"/>
  <path d="M919.5 9.5H930V19H926L924 21V19H919.5Z" fill="none" stroke="#fff" stroke-width="1"/>
  <path d="M921.5 12.5H928M921.5 15H926" stroke="#fff" stroke-width="1"/>
  <circle cx="927.5" cy="18.5" r="2.8" fill="#000" stroke="#fff" stroke-width="1"/>
  <rect x="1021.5" y="0" width="1" height="30" fill="#555"/>
</svg>
<div class="t" style="left:66.5px;top:555.5px;font-size:10.9px;color:#a8a8a8">Ask me anything</div>
<div class="t" style="left:938.7px;top:555.4px;font-size:9.6px;letter-spacing:-1px;color:#f0f0f0">ENG</div>
<div class="t" style="left:974.2px;top:549px;font-size:8.9px;color:#fff">7:12 AM</div>
<div class="t" style="left:968px;top:561.5px;font-size:8.75px;color:#fff">04/08/2016</div>
<!-- logo -->
<svg class="a" style="left:0;top:575px" width="380" height="50" viewBox="0 575 380 50">
  <g fill="none" stroke="#1c3a80" stroke-width="5">
    <path d="M18.5 581.8A26.5 32.7 0 0 0 45 614.5H53.2V581.8"/>
    <path d="M62.5 581.8V617"/>
    <path d="M62.5 614C68 603 78 601.5 88 602C105 603 125 616 145 616.5C165 617 174.5 605 174.5 581.8"/>
    <path d="M196.9 608.7V584.5H225.4V600Q225.4 619.7 205 619.7H193.4"/>
    <path d="M193.9 606H204.7"/>
    <path d="M216.9 612.4H239.6V599.9"/>
  </g>
  <g fill="#d8174c">
    <circle cx="37.3" cy="589.6" r="7.8"/>
    <circle cx="183.7" cy="601" r="6.8"/>
    <circle cx="183.7" cy="616" r="7"/>
    <circle cx="239.8" cy="589.2" r="7.8"/>
  </g>
  <g fill="none" stroke="#d8174c" stroke-width="4.5">
    <path d="M250 616.3A35 31.5 0 0 1 284.7 584.8V614H262.2V604.8"/>
    <path d="M293.9 582.6V614H315.2V597.9"/>
    <path d="M323.2 616.3A36 31.5 0 0 1 359 584.8H360.6"/>
  </g>
  <g fill="#1c3a80">
    <circle cx="310.5" cy="585.8" r="7.6"/>
    <circle cx="349.2" cy="608.6" r="10.2"/>
  </g>
  <text x="70.5" y="588" font-family="Liberation Sans" font-size="9.6" fill="#26306e" stroke="#26306e" stroke-width="0.25" textLength="94" lengthAdjust="spacingAndGlyphs">www.BarnameNevisan.org</text>
</svg>
</body></html>
